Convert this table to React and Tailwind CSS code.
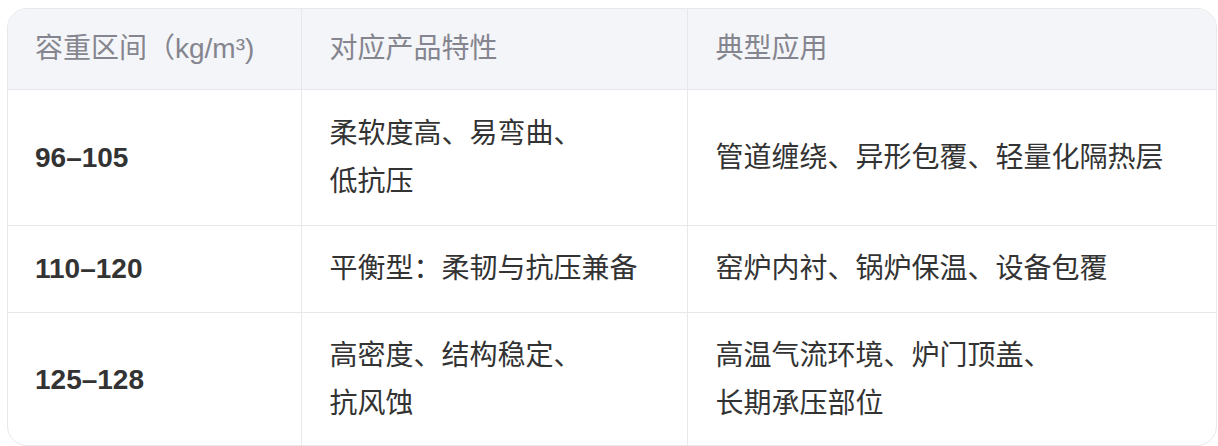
import React from 'react';

const rows = [
  {
    range: '96–105',
    feature: ['柔软度高、易弯曲、', '低抗压'],
    usage: ['管道缠绕、异形包覆、轻量化隔热层'],
    pad: 'pt-[20px] pb-[19px]',
  },
  {
    range: '110–120',
    feature: ['平衡型：柔韧与抗压兼备'],
    usage: ['窑炉内衬、锅炉保温、设备包覆'],
    pad: 'py-[19px]',
  },
  {
    range: '125–128',
    feature: ['高密度、结构稳定、', '抗风蚀'],
    usage: ['高温气流环境、炉门顶盖、', '长期承压部位'],
    pad: 'pt-[19px] pb-[17px]',
  },
];

function Lines({ lines }) {
  return lines.map((l, i) => (
    <React.Fragment key={i}>
      {l}
      {i < lines.length - 1 && <br />}
    </React.Fragment>
  ));
}

export default function App() {
  return (
    <div
      className="min-h-screen bg-white pt-[8px] pl-[7px] pr-[1px]"
      style={{ fontFamily: '"Liberation Sans", "Noto Sans CJK SC", sans-serif' }}
    >
      <div className="border border-[#e8e8ec] rounded-[20px] overflow-hidden">
        <table className="w-full border-collapse table-fixed text-[28px] leading-[48px]">
          <colgroup>
            <col className="w-[293px]" />
            <col className="w-[386px]" />
            <col />
          </colgroup>
          <thead>
            <tr className="bg-[#f4f5f8] text-[#85858f] text-left">
              <th className="font-normal px-[27px] py-4 border-b border-r border-[#e8e8ec]">
                容重区间（kg/m³)
              </th>
              <th className="font-normal px-[28px] py-4 border-b border-r border-[#e8e8ec]">
                对应产品特性
              </th>
              <th className="font-normal px-[28px] py-4 border-b border-[#e8e8ec]">
                典型应用
              </th>
            </tr>
          </thead>
          <tbody className="text-[#333333]">
            {rows.map((r, i) => (
              <tr key={r.range} className={i < rows.length - 1 ? 'border-b border-[#e8e8ec]' : ''}>
                <td className={`px-[27px] ${r.pad} font-bold border-r border-[#e8e8ec] align-middle`}>
                  {r.range}
                </td>
                <td className={`px-[28px] ${r.pad} border-r border-[#e8e8ec] align-middle`}>
                  <Lines lines={r.feature} />
                </td>
                <td className={`px-[28px] ${r.pad} align-middle`}>
                  <Lines lines={r.usage} />
                </td>
              </tr>
            ))}
          </tbody>
        </table>
      </div>
    </div>
  );
}
